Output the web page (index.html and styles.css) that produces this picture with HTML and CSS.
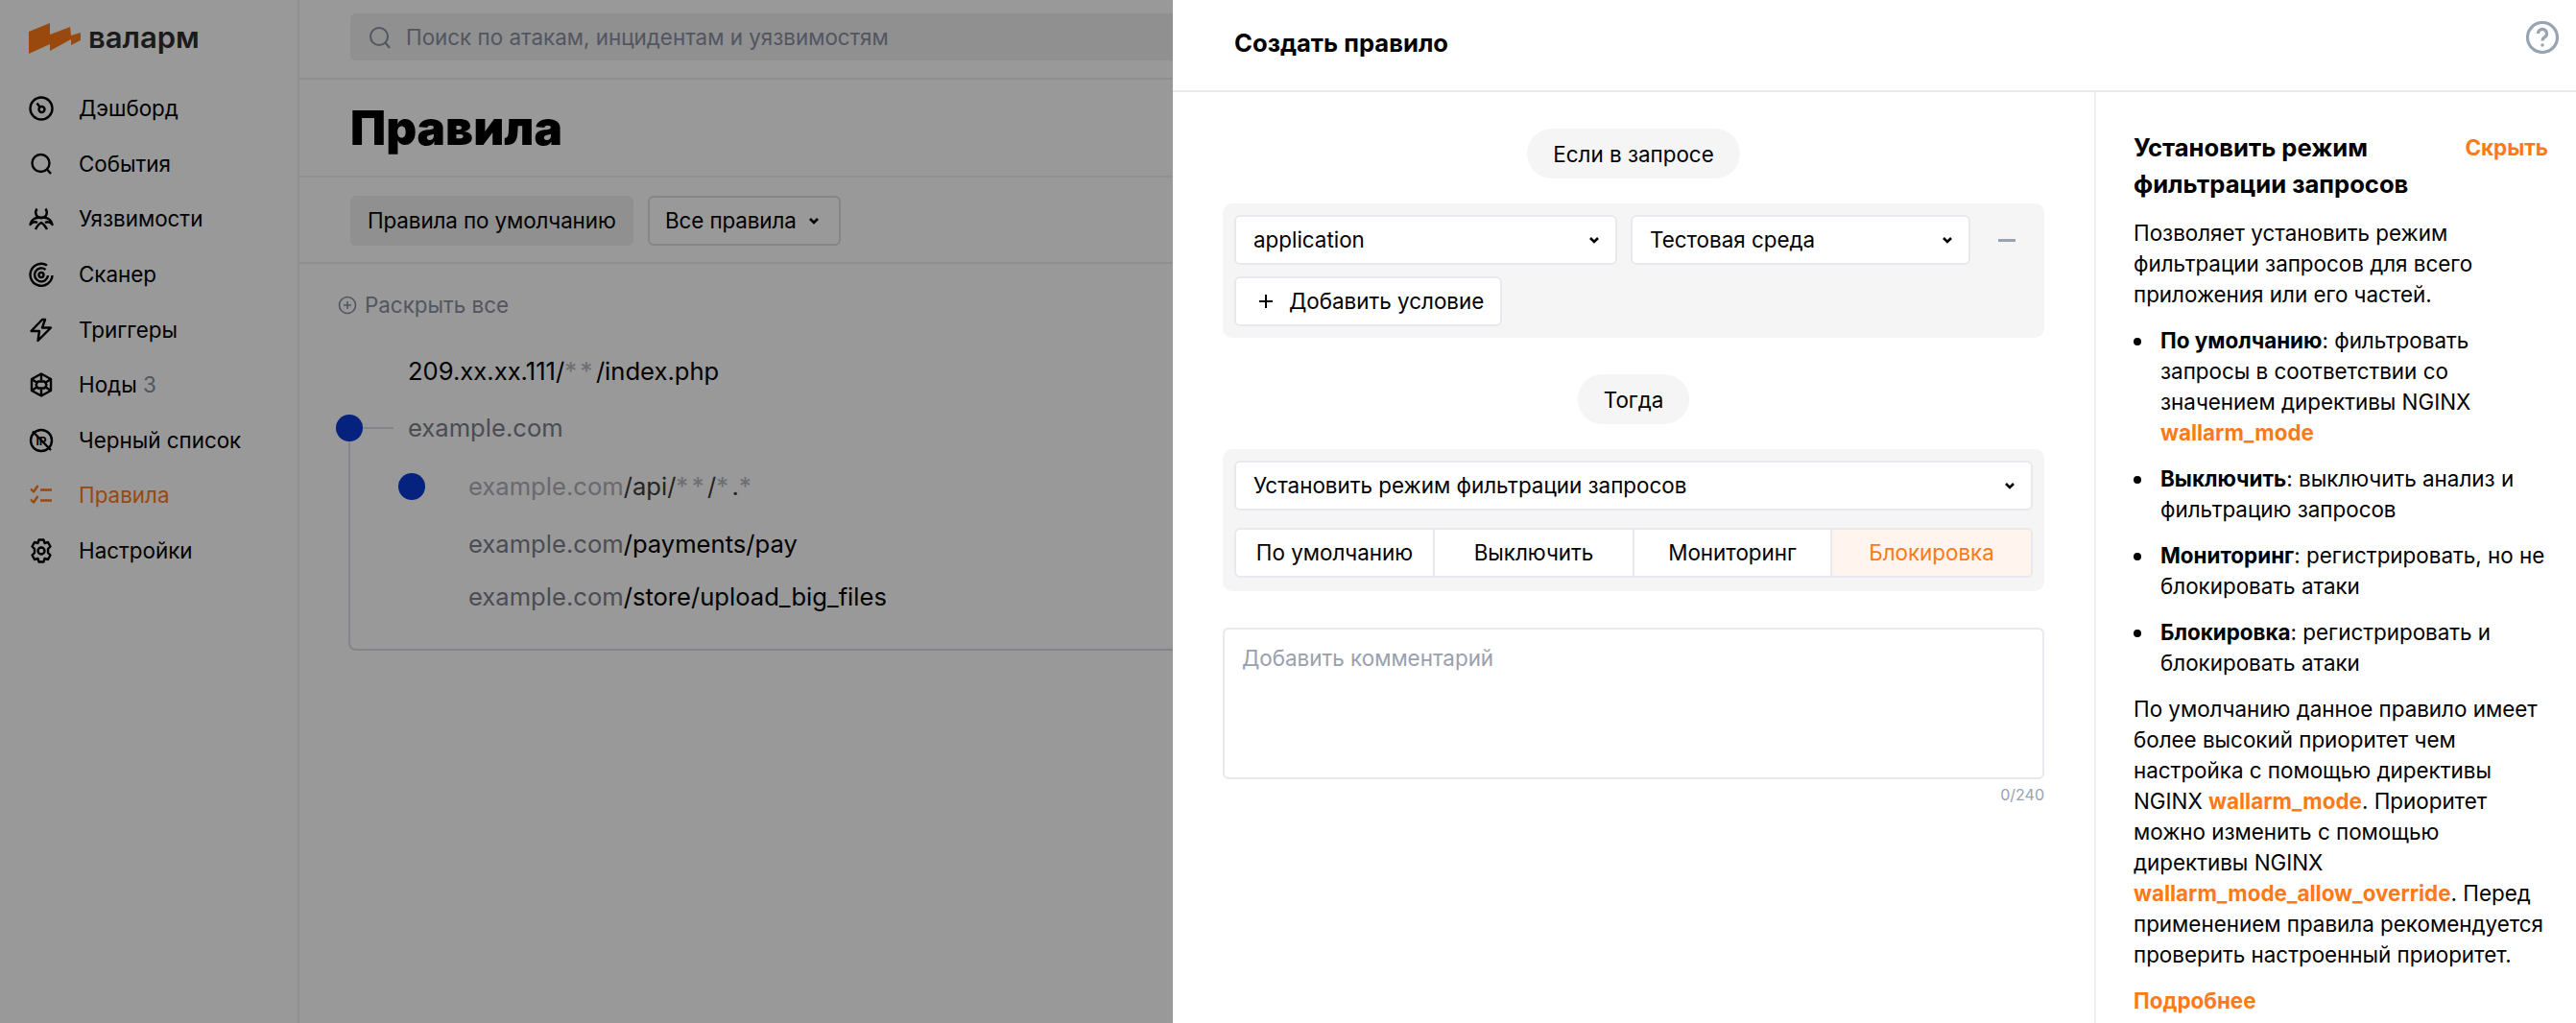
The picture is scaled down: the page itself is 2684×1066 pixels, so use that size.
FILE: index.html
```html
<!DOCTYPE html>
<html lang="ru">
<head>
<meta charset="utf-8">
<title>Правила</title>
<link rel="stylesheet" href="styles.css">
</head>
<body>

<div class="app">
  <aside class="sidebar">
    <div class="logo">
      <svg class="logo-mark" viewBox="0 0 54 32"><polygon points="0,32 0,9 22,0 22,12 43,4 44,13 54,10 54,18 44,23 44,17 22,29 22,22"/></svg>
      <span class="logo-text">валарм</span>
    </div>
    <nav class="nav">
      <a class="nav-item">
        <svg class="icon" viewBox="0 0 26 26"><circle cx="13" cy="13" r="11.5"/><circle cx="13.5" cy="14" r="3"/><path d="M8.5 7.5 11.5 11.5"/></svg>
        Дэшборд
      </a>
      <a class="nav-item">
        <svg class="icon" viewBox="0 0 26 26"><circle cx="12.5" cy="12" r="9"/><path d="M19 18.5 23 23"/></svg>
        События
      </a>
      <a class="nav-item">
        <svg class="icon" viewBox="0 0 26 26"><path d="M8.5 2.5C5.5 7 8 12 13 12s7.5-5 4.500-9.500"/><path d="M13 12C8 11 3 13 1.500 19 4 16 7 16 9 17"/><path d="M13 12c5-1 10 1 11.500 7-2.500-3-5.500-3-7.500-2"/><path d="M7 24c2-4 4-6 6-7 2 1 4 3 6 7"/></svg>
        Уязвимости
      </a>
      <a class="nav-item">
        <svg class="icon" viewBox="0 0 26 26"><path d="M19 3.500A11.500 11.500 0 1 0 24.500 14"/><path d="M17.500 8A7 7 0 1 0 20 14"/><circle cx="13" cy="13.500" r="2.500"/></svg>
        Сканер
      </a>
      <a class="nav-item">
        <svg class="icon" viewBox="0 0 26 26"><path d="M14 2 2.500 14H11l-1.500 10L23 10.500h-9L17 2z"/></svg>
        Триггеры
      </a>
      <a class="nav-item">
        <svg class="icon" viewBox="0 0 26 26"><path d="M13 1.500 23 7v12l-10 5.500L3 19V7z"/><path d="M13 1.500v7M13 17.500v7M3 7l6 4M23 7l-6 4M3 19l6-4M23 19l-6-4"/><path d="M9.500 9.500h7l2 3.500-2 3.500h-7l-2-3.500z"/></svg>
        <span>Ноды <span class="nav-count">3</span></span>
      </a>
      <a class="nav-item">
        <svg class="icon" viewBox="0 0 26 26"><circle cx="13" cy="13" r="11"/><path d="M4 3.500 23 23"/><text class="icon-label" x="7.500" y="18">IP</text></svg>
        Черный список
      </a>
      <a class="nav-item nav-item-active">
        <svg class="icon" viewBox="0 0 26 26"><path d="M2 6.500 5 9.500 9.500 3M2 17.500l3 3L9.500 14M12 7.500h12M12 18.500h12"/></svg>
        Правила
      </a>
      <a class="nav-item">
        <svg class="icon" viewBox="0 0 26 26"><path d="M10.500 1.500h5l1 3.500 3.500-1 2.500 4.500L20 11v4l2.500 2.500-2.500 4.500-3.500-1-1 3.500h-5l-1-3.500-3.500 1-2.500-4.500L6 15v-4L3.500 8.500 6 4l3.500 1z"/><circle cx="13" cy="13" r="3.500"/></svg>
        Настройки
      </a>
    </nav>
  </aside>

  <main class="main">
    <div class="topbar">
      <div class="search">
        <svg class="icon search-icon" viewBox="0 0 26 26"><circle cx="12" cy="12" r="9"/><path d="M18.500 18.500 23 24"/></svg>
        Поиск по атакам, инцидентам и уязвимостям
      </div>
    </div>
    <div class="page-head"><h1>Правила</h1></div>
    <div class="toolbar">
      <button class="tool-btn tool-btn-default">Правила по умолчанию</button>
      <button class="tool-btn tool-btn-outline">Все правила
        <svg class="chevron" viewBox="0 0 12 8"><path d="M2 2l4 4 4-4"/></svg>
      </button>
    </div>
    <div class="rules">
      <div class="expand">
        <svg class="expand-icon" viewBox="0 0 20 20"><circle cx="10" cy="10" r="8.500"/><path d="M10 6v8M6 10h8"/></svg>
        Раскрыть все
      </div>
      <div class="rule rule-first"><span>209.xx.xx.111/<i>**</i>/index.php</span></div>
      <div class="rule rule-host">
        <b class="dot"></b><b class="stem"></b>
        <span class="host">example.com</span>
      </div>
      <div class="tree-group">
        <div class="rule rule-child rule-faded">
          <b class="dot dot-small"></b>
          <span><span class="host">example.com</span>/api/<i>**</i>/<i>*</i>.<i>*</i></span>
        </div>
        <div class="rule rule-child"><span><span class="host">example.com</span>/payments/pay</span></div>
        <div class="rule rule-child rule-last"><span><span class="host">example.com</span>/store/upload_big_files</span></div>
      </div>
    </div>
  </main>
</div>

<div class="overlay"></div>

<section class="drawer">
  <header class="drawer-head">
    <h2>Создать правило</h2>
    <svg class="help-icon" viewBox="0 0 34 34"><circle cx="17" cy="17" r="15.500"/><path d="M12.500 13a4.500 4.500 0 1 1 7 3.700c-1.600 1-2.500 1.800-2.500 3.800"/><circle class="help-dot" cx="17" cy="25" r="1.800"/></svg>
  </header>
  <div class="drawer-body">
    <div class="form">
      <div class="pill">Если в запросе</div>
      <div class="panel">
        <div class="cond-row">
          <div class="select select-point">application
            <svg class="chevron" viewBox="0 0 12 8"><path d="M2 2l4 4 4-4"/></svg>
          </div>
          <div class="select select-value">Тестовая среда
            <svg class="chevron" viewBox="0 0 12 8"><path d="M2 2l4 4 4-4"/></svg>
          </div>
          <div class="remove"><b></b></div>
        </div>
        <div class="add-btn">
          <svg class="plus" viewBox="0 0 18 18"><path d="M9 2v14M2 9h14"/></svg>
          Добавить условие
        </div>
      </div>
      <div class="pill pill-then">Тогда</div>
      <div class="panel panel-action">
        <div class="select">Установить режим фильтрации запросов
          <svg class="chevron" viewBox="0 0 12 8"><path d="M2 2l4 4 4-4"/></svg>
        </div>
        <div class="segments">
          <div class="segment">По умолчанию</div>
          <div class="segment">Выключить</div>
          <div class="segment">Мониторинг</div>
          <div class="segment segment-active">Блокировка</div>
        </div>
      </div>
      <div class="comment">Добавить комментарий</div>
      <div class="counter">0/240</div>
    </div>
    <aside class="help">
      <div class="help-head">
        <h3>Установить режим фильтрации запросов</h3>
        <a class="link">Скрыть</a>
      </div>
      <p>Позволяет установить режим фильтрации запросов для всего приложения или его частей.</p>
      <ul>
        <li><strong>По умолчанию</strong>: фильтровать запросы в соответствии со значением директивы NGINX <a class="link">wallarm_mode</a></li>
        <li><strong>Выключить</strong>: выключить анализ и фильтрацию запросов</li>
        <li><strong>Мониторинг</strong>: регистрировать, но не блокировать атаки</li>
        <li><strong>Блокировка</strong>: регистрировать и блокировать атаки</li>
      </ul>
      <p>По умолчанию данное правило имеет более высокий приоритет чем настройка с помощью директивы NGINX <a class="link">wallarm_mode</a>. Приоритет можно изменить с помощью директивы NGINX <a class="link">wallarm_mode_allow_override</a>. Перед применением правила рекомендуется проверить настроенный приоритет.</p>
      <p><a class="link">Подробнее</a></p>
    </aside>
  </div>
</section>

</body>
</html>
```
FILE: styles.css
```css
* {
  box-sizing: border-box;
}

html, body {
  height: 100%;
}

body {
  margin: 0;
  overflow: hidden;
  font-family: Inter, "Liberation Sans", sans-serif;
  font-size: 22.4px;
  line-height: 32px;
  color: #000;
  background: #fff;
}

.app {
  display: flex;
  height: 100%;
}

.overlay {
  position: fixed;
  top: 0;
  left: 0;
  right: 0;
  bottom: 0;
  background: rgba(0, 0, 0, 0.4);
}

/* sidebar */
.sidebar {
  flex: none;
  width: 312px;
  border-right: 2px solid #f0f0f2;
}

.logo {
  display: flex;
  align-items: center;
  gap: 8px;
  height: 80px;
  padding-left: 30px;
}

.logo-mark {
  width: 54px;
  height: 32px;
  fill: #ff7a17;
}

.logo-text {
  margin-top: -2px;
  font-size: 31px;
  font-weight: 600;
  color: #2e2e2e;
}

.nav {
  padding-top: 4.4px;
}

.nav-item {
  display: flex;
  align-items: center;
  gap: 26px;
  height: 57.6px;
  padding-left: 30px;
  color: #000;
}

.nav-item-active {
  color: #ff7a17;
}

.nav-count {
  color: #8a8fa0;
}

.icon {
  flex: none;
  width: 26px;
  height: 26px;
  fill: none;
  stroke: currentColor;
  stroke-width: 2.4;
  stroke-linejoin: round;
}

.icon-label {
  font-size: 12px;
  font-weight: 700;
  fill: currentColor;
  stroke: none;
}

/* page behind the drawer */
.main {
  flex: 1;
  min-width: 0;
}

.topbar {
  height: 83px;
  padding: 14px 0 0 53px;
  border-bottom: 2px solid #f0f0f2;
}

.search {
  display: flex;
  align-items: center;
  gap: 14px;
  width: 880px;
  height: 49px;
  padding-left: 18px;
  border-radius: 6px;
  background: #f0f0f2;
  color: #8a8fa0;
}

.search-icon {
  stroke-width: 2;
}

.page-head {
  height: 102px;
  padding: 19px 0 0 53px;
  border-bottom: 2px solid #f0f0f2;
}

h1 {
  margin: 0;
  font-size: 49.5px;
  line-height: 62px;
  font-weight: 900;
}

.toolbar {
  display: flex;
  gap: 15px;
  height: 90px;
  padding: 19px 0 0 53px;
  border-bottom: 2px solid #f0f0f2;
}

.tool-btn {
  display: flex;
  align-items: center;
  gap: 12px;
  height: 52px;
  padding: 0 16px;
  border: 2px solid transparent;
  border-radius: 6px;
  background: #f0f0f2;
  font: inherit;
  letter-spacing: -0.1px;
  color: #000;
}

.tool-btn-default {
  width: 295px;
}

.tool-btn-outline {
  width: 201px;
  background: transparent;
  border-color: #e0e0e4;
}

.chevron {
  flex: none;
  width: 12px;
  height: 8px;
  fill: none;
  stroke: currentColor;
  stroke-width: 2.6;
}

.rules {
  padding: 27px 0 0 40px;
}

.expand {
  display: flex;
  align-items: center;
  gap: 8px;
  width: fit-content;
  height: 32px;
  color: #8a8fa0;
}

.expand-icon {
  width: 20px;
  height: 20px;
  fill: none;
  stroke: currentColor;
  stroke-width: 1.6;
}

.rule {
  position: relative;
  display: flex;
  align-items: center;
  width: fit-content;
  height: 60px;
  font-size: 25.6px;
}

.rule i {
  font-style: normal;
  letter-spacing: 3.5px;
  color: #b4b7c2;
}

.rule-first {
  height: 58px;
  margin-top: 24px;
  padding-left: 73px;
}

.rule-host {
  padding-left: 73px;
}

.host {
  color: #7c7f8a;
}

.dot {
  position: absolute;
  left: -2px;
  top: 16px;
  width: 28px;
  height: 28px;
  border-radius: 50%;
  background: #073ad3;
}

.dot-small {
  left: 50px;
  top: 17px;
}

.stem {
  position: absolute;
  left: 26px;
  top: 29px;
  width: 32px;
  height: 2px;
  background: #dcdde4;
}

.tree-group {
  margin: -16px 0 0 11px;
  padding: 16px 0 29px;
  border-left: 2px solid #dcdde4;
  border-bottom: 2px solid #dcdde4;
  border-bottom-left-radius: 8px;
}

.rule-child {
  padding-left: 123px;
}

.rule-faded {
  height: 61px;
  color: #3c3c3c;
}

.rule-faded .host {
  color: #aeb0b8;
}

.rule-last {
  height: 50px;
}

/* drawer */
.drawer {
  position: fixed;
  top: 0;
  right: 0;
  bottom: 0;
  width: 1462px;
  display: flex;
  flex-direction: column;
  background: #fff;
}

.drawer-head {
  flex: none;
  display: flex;
  align-items: flex-start;
  justify-content: space-between;
  height: 96px;
  padding: 0 18px 0 64px;
  border-bottom: 2px solid #e8e8ee;
}

h2 {
  margin: 26px 0 0;
  font-size: 25.6px;
  line-height: 38px;
  font-weight: 700;
}

.help-icon {
  width: 34px;
  height: 34px;
  margin-top: 22px;
  fill: none;
  stroke: #9aa3b2;
  stroke-width: 3.2;
}

.help-dot {
  fill: #9aa3b2;
  stroke: none;
}

.drawer-body {
  flex: 1;
  min-height: 0;
  display: flex;
}

.form {
  flex: 1;
  display: flex;
  flex-direction: column;
  padding: 38px 52px 0 52px;
}

.pill {
  align-self: center;
  height: 52px;
  padding: 0 27px;
  margin-bottom: 26px;
  border-radius: 26px;
  background: #f5f5f6;
  line-height: 53px;
}

.pill-then {
  margin-top: 38px;
}

.panel {
  display: flex;
  flex-direction: column;
  align-items: flex-start;
  gap: 12px;
  padding: 12px;
  border-radius: 10px;
  background: #f5f5f6;
}

.panel-action {
  align-items: stretch;
  gap: 18px;
  padding-bottom: 14px;
}

.cond-row {
  display: flex;
  gap: 14px;
  width: 100%;
}

.select {
  display: flex;
  align-items: center;
  justify-content: space-between;
  height: 52px;
  padding: 0 16px 0 18px;
  border: 2px solid #e8e8ee;
  border-radius: 6px;
  background: #fff;
}

.select-point {
  width: 399px;
}

.select-value {
  width: 354px;
}

.remove {
  flex: 1;
  display: flex;
  align-items: center;
  justify-content: center;
  padding-right: 4px;
}

.remove b {
  width: 18px;
  height: 3px;
  background: #9aa3b2;
}

.add-btn {
  display: flex;
  align-items: center;
  gap: 15px;
  height: 52px;
  padding: 0 17px 0 22px;
  border: 2px solid #e8e8ee;
  border-radius: 6px;
  background: #fff;
}

.plus {
  width: 18px;
  height: 18px;
  fill: none;
  stroke: #000;
  stroke-width: 2;
}

.segments {
  display: grid;
  grid-template-columns: 205px 208px 206px 1fr;
  height: 52px;
  border: 2px solid #e8e8ee;
  border-radius: 6px;
  background: #fff;
  overflow: hidden;
}

.segment {
  display: flex;
  align-items: center;
  justify-content: center;
  border-left: 2px solid #e8e8ee;
}

.segment:first-child {
  border-left: 0;
}

.segment-active {
  background: #fff4ee;
  color: #ff7a17;
}

.comment {
  height: 158px;
  margin-top: 38px;
  padding: 14px 18px;
  border: 2px solid #e8e8ee;
  border-radius: 6px;
  color: #9aa0ae;
}

.counter {
  align-self: flex-end;
  margin-top: 6px;
  font-size: 16px;
  line-height: 20px;
  color: #9aa0ae;
}

.help {
  flex: none;
  width: 502px;
  padding: 39px 31px 0 39px;
  border-left: 2px solid #f0f0f4;
}

.help-head {
  display: flex;
  justify-content: space-between;
  margin-bottom: 16px;
}

h3 {
  margin: 0;
  width: 320px;
  font-size: 25.6px;
  line-height: 38px;
  font-weight: 700;
}

.link {
  font-weight: 700;
  color: #ff7a17;
}

.help-head .link {
  margin-right: -2px;
  line-height: 38px;
}

.help p {
  margin: 0 0 16px;
}

.help ul {
  margin: 0 0 16px;
  padding: 0 0 0 28px;
  list-style: none;
}

.help li {
  position: relative;
  margin-bottom: 16px;
}

.help li:last-child {
  margin-bottom: 0;
}

.help li::before {
  content: "";
  position: absolute;
  left: -28px;
  top: 13px;
  width: 8px;
  height: 8px;
  border-radius: 50%;
  background: #000;
}

strong {
  font-weight: 700;
}
```
